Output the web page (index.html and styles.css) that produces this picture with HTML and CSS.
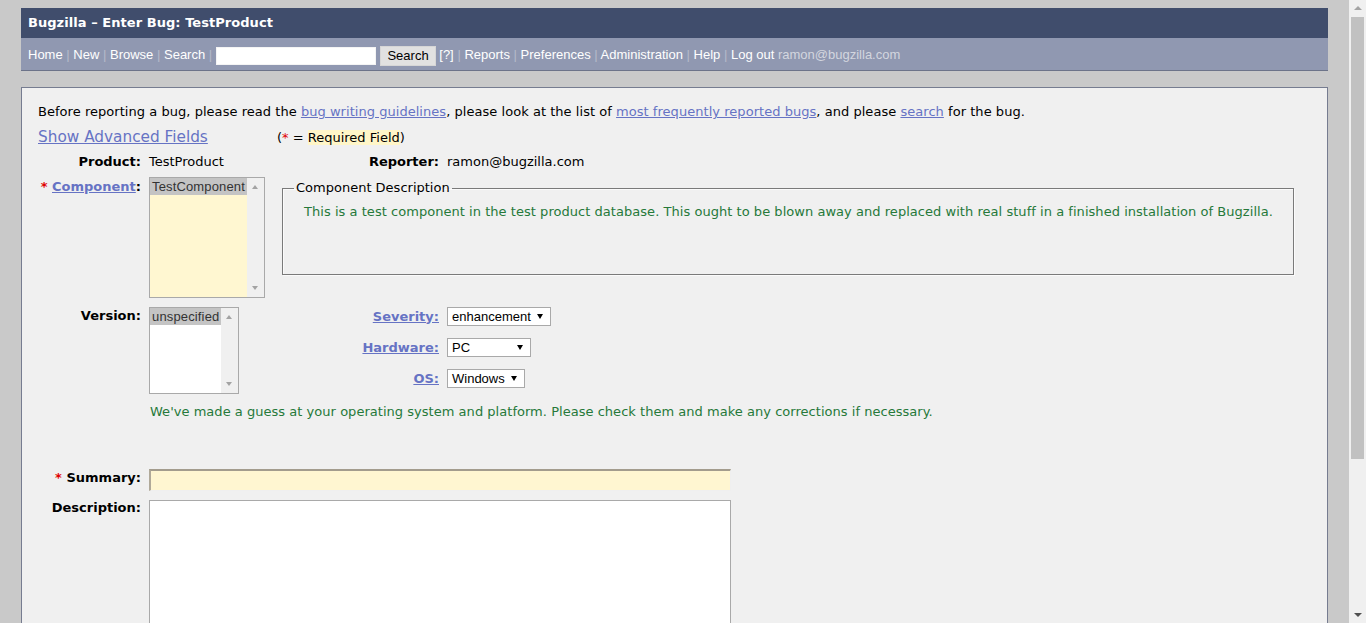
FILE: index.html
```html
<!DOCTYPE html>
<html lang="en">
<head>
<meta charset="utf-8">
<title>Bugzilla – Enter Bug: TestProduct</title>
<link rel="stylesheet" href="styles.css">
</head>
<body>
<div class="page">
  <header class="header">
    <div class="title-bar">Bugzilla – Enter Bug: TestProduct</div>
    <nav class="nav"><a href="#">Home</a> <span class="sep">|</span> <a href="#">New</a> <span class="sep">|</span> <a href="#">Browse</a> <span class="sep">|</span> <a href="#">Search</a> <span class="sep">|</span> <input class="quick" type="text" aria-label="Quick search"> <button class="btn" type="button">Search</button> <a href="#">[?]</a> <span class="sep">|</span> <a href="#">Reports</a> <span class="sep">|</span> <a href="#">Preferences</a> <span class="sep">|</span> <a href="#">Administration</a> <span class="sep">|</span> <a href="#">Help</a> <span class="sep">|</span> <a href="#">Log out</a> <span class="email">ramon@bugzilla.com</span></nav>
  </header>

  <main class="content">
    <p class="intro">Before reporting a bug, please read the <a href="#">bug writing guidelines</a>, please look at the list of <a href="#">most frequently reported bugs</a>, and please <a href="#">search</a> for the bug.</p>

    <div class="adv-row">
      <a class="adv-link" href="#">Show Advanced Fields</a>
      <span class="req-note">(<span class="req">*</span> = <span class="req-hl">Required Field</span>)</span>
    </div>

    <div class="row row-product">
      <div class="label">Product:</div>
      <div class="value">TestProduct</div>
      <div class="label">Reporter:</div>
      <div class="value">ramon@bugzilla.com</div>
    </div>

    <div class="row row-component">
      <div class="label label-top"><span class="req">*</span> <a class="field-link" href="#">Component</a>:</div>
      <div class="listbox listbox-component">
        <div class="lb-options"><div class="lb-option is-selected">TestComponent</div></div>
        <div class="lb-scroll"><span class="arrow-up"></span><span class="arrow-down"></span></div>
      </div>
      <fieldset class="comp-desc">
        <legend>Component Description</legend>
        <p class="green">This is a test component in the test product database. This ought to be blown away and replaced with real stuff in a finished installation of Bugzilla.</p>
      </fieldset>
    </div>

    <div class="row row-version">
      <div class="label label-top">Version:</div>
      <div class="listbox listbox-version">
        <div class="lb-options"><div class="lb-option is-selected">unspecified</div></div>
        <div class="lb-scroll"><span class="arrow-up"></span><span class="arrow-down"></span></div>
      </div>
      <div class="selects">
        <a class="field-link sel-label" href="#">Severity:</a>
        <div class="select select-severity"><span>enhancement</span><span class="caret"></span></div>
        <a class="field-link sel-label" href="#">Hardware:</a>
        <div class="select select-hardware"><span>PC</span><span class="caret"></span></div>
        <a class="field-link sel-label" href="#">OS:</a>
        <div class="select select-os"><span>Windows</span><span class="caret"></span></div>
      </div>
    </div>

    <p class="guess green">We've made a guess at your operating system and platform. Please check them and make any corrections if necessary.</p>

    <div class="row row-summary">
      <div class="label label-top"><span class="req">*</span> Summary:</div>
      <input class="summary-input" type="text" aria-label="Summary">
    </div>

    <div class="row row-description">
      <div class="label label-top">Description:</div>
      <textarea class="desc-input" aria-label="Description"></textarea>
    </div>
  </main>
</div>

<div class="vscroll" aria-hidden="true">
  <span class="vs-up"></span>
  <span class="vs-thumb"></span>
  <span class="vs-down"></span>
</div>
</body>
</html>
```

FILE: styles.css
```css
html {
  overflow: hidden;
}

body {
  margin: 8px 38px 0 21px;
  background: #c9c9c9;
  font-family: "DejaVu Sans", Verdana, sans-serif;
  font-size: 13px;
  color: #000;
}

a {
  color: #6673c4;
}

/* ---------- header ---------- */
.title-bar {
  height: 30px;
  line-height: 30px;
  padding-left: 7px;
  background: #404d6c;
  color: #fff;
  font-weight: bold;
  font-size: 13px;
  letter-spacing: 0.05px;
}

.nav {
  height: 32px;
  line-height: 34px;
  padding-left: 7px;
  background: #9098b1;
  border-bottom: 1px solid #6c7389;
  font-family: "Liberation Sans", Arial, sans-serif;
  font-size: 13px;
  color: #fff;
  white-space: nowrap;
  overflow: hidden;
}

.nav a {
  color: #fff;
  text-decoration: none;
}

.nav .sep {
  color: #b5bacb;
}

.nav .email {
  color: #d3d6df;
}

.quick {
  width: 160px;
  height: 18px;
  box-sizing: border-box;
  margin: 0;
  padding: 0 3px;
  border: 1px solid #f4f4f4;
  background: #fff;
  vertical-align: middle;
}

.btn {
  height: 20px;
  margin: 0 0 0 1px;
  padding: 0 6px;
  border: 1px solid #d6d6d6;
  background: #e1e1e1;
  font-family: "Liberation Sans", Arial, sans-serif;
  font-size: 13px;
  color: #000;
  vertical-align: middle;
}

/* ---------- content ---------- */
.content {
  margin-top: 16px;
  padding: 16px 16px 40px;
  background: #f0f0f0;
  border: 1px solid #767c90;
  border-bottom: none;
  min-height: 600px;
}

.intro {
  margin: 0;
  line-height: 16px;
  letter-spacing: 0.04px;
}

.adv-row {
  display: flex;
  align-items: baseline;
  margin-top: 7px;
  height: 20px;
  line-height: 20px;
}

.adv-link {
  width: 239px;
  font-size: 15.3px;
}

.req-note {
  line-height: 16px;
}

.req {
  color: #e00000;
}

.req-hl {
  background: #fff6c8;
}

.row {
  display: grid;
  grid-template-columns: 103px 125px 157px 1fr;
  column-gap: 8px;
  line-height: 16px;
}

.label {
  text-align: right;
  font-weight: bold;
}

.label-top {
  align-self: start;
}

.row-product {
  margin-top: 7px;
}

.row-component {
  margin-top: 7px;
  align-items: start;
}

.row-component .label {
  padding-top: 2px;
}

.field-link {
  font-weight: bold;
}

/* listboxes */
.listbox {
  display: flex;
  box-sizing: border-box;
  border: 1px solid #a9a9a9;
  font-family: "Liberation Sans", Arial, sans-serif;
  font-size: 13px;
}

.listbox-component {
  width: 116px;
  height: 121px;
}

.listbox-version {
  width: 90px;
  height: 87px;
  background: #fff;
}

.lb-options {
  flex: 1;
  background: #fff;
}

.listbox-component .lb-options {
  background: #fff7d1;
}

.lb-option {
  padding: 1px 2px;
  line-height: 15px;
  color: #333;
  white-space: nowrap;
  letter-spacing: 0.15px;
}

.lb-option.is-selected {
  background: #c4c4c4;
}

.lb-scroll {
  position: relative;
  width: 17px;
  background: #f0f0f0;
}

.arrow-up,
.arrow-down {
  position: absolute;
  left: 5px;
  width: 0;
  height: 0;
  border-left: 3.5px solid transparent;
  border-right: 3.5px solid transparent;
}

.arrow-up {
  top: 7px;
  border-bottom: 4px solid #a3a3a3;
}

.arrow-down {
  bottom: 7px;
  border-top: 4px solid #a3a3a3;
}

/* fieldset */
.comp-desc {
  grid-column: 3 / 5;
  margin: 3px 17px 0 0;
  padding: 0 12px 54px 11px;
  border: 1px solid #7a7a7a;
  box-shadow: inset 1px 1px 0 #fbfbfb, 1px 1px 0 #fbfbfb;
  min-width: 0;
}

.comp-desc legend {
  padding: 0 2px;
  line-height: 16px;
}

.comp-desc p {
  margin: 8px 0 0 10px;
  letter-spacing: 0.04px;
}

.green {
  color: #26793a;
}

/* version row */
.row-version {
  margin-top: 9px;
  align-items: start;
}

.row-version .label {
  padding-top: 1px;
}

.selects {
  grid-column: 3 / 5;
  display: grid;
  grid-template-columns: 157px auto;
  column-gap: 8px;
  row-gap: 12px;
  justify-content: start;
  align-items: center;
}

.sel-label {
  text-align: right;
  line-height: 18px;
}

.select {
  position: relative;
  box-sizing: border-box;
  height: 19px;
  padding-left: 4px;
  border: 1px solid #a9a9a9;
  background: #fff;
  font-family: "Liberation Sans", Arial, sans-serif;
  font-size: 13px;
  line-height: 17px;
  color: #000;
}

.select-severity { width: 104px; }
.select-hardware { width: 84px; }
.select-os { width: 78px; }

.caret {
  position: absolute;
  right: 7px;
  top: 6px;
  width: 0;
  height: 0;
  border-left: 3px solid transparent;
  border-right: 3px solid transparent;
  border-top: 5px solid #000;
}

.guess {
  margin: 10px 0 0 112px;
  line-height: 16px;
  letter-spacing: 0.03px;
}

/* summary / description */
.row-summary,
.row-description {
  grid-template-columns: 103px 582px;
}

.row-summary {
  margin-top: 49px;
}

.row-summary .label {
  padding-top: 1px;
}

.summary-input {
  box-sizing: border-box;
  width: 582px;
  height: 22px;
  margin: 0;
  border-style: solid;
  border-width: 2px 1px 1px 2px;
  border-color: #a39c8d #efefef #efefef #b0a999;
  background: #fff6d1;
}

.row-description {
  margin-top: 9px;
}

.desc-input {
  box-sizing: border-box;
  width: 582px;
  height: 200px;
  margin: 0;
  border: 1px solid #a9a9a9;
  background: #fff;
  resize: none;
}

/* fake page scrollbar */
.vscroll {
  position: fixed;
  top: 0;
  right: 0;
  width: 17px;
  height: 100%;
  background: #f0f0f0;
}

.vs-up,
.vs-down {
  position: absolute;
  left: 5px;
  width: 0;
  height: 0;
  border-left: 4px solid transparent;
  border-right: 4px solid transparent;
}

.vs-up {
  top: 6px;
  border-bottom: 4px solid #a3a3a3;
}

.vs-down {
  bottom: 6px;
  border-top: 4px solid #505050;
}

.vs-thumb {
  position: absolute;
  top: 17px;
  left: 2px;
  width: 13px;
  height: 442px;
  background: #c1c1c1;
}
```
